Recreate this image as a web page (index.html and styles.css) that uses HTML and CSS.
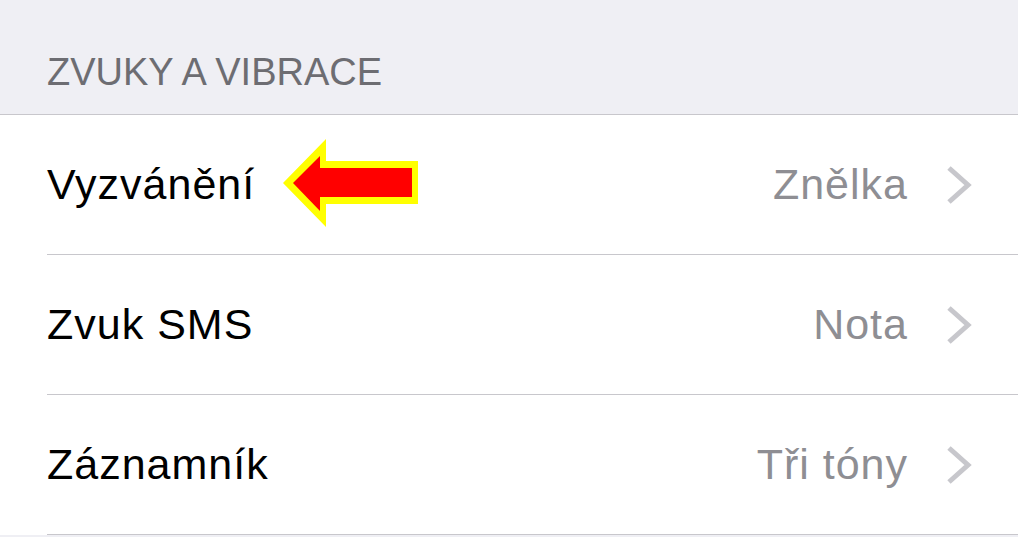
FILE: index.html
```html
<!DOCTYPE html>
<html>
    <head>
        <meta charset='utf-8'/>
        <title>Zvuky a vibrace</title>
        <link rel="stylesheet" href="styles.css">
    </head>
    <body>
        <div class="section-header">ZVUKY A VIBRACE</div>
        <ul class="settings-list">
            <li class="row">
                <div class="row-inner">
                    <span class="label">Vyzvánění</span>
                    <span class="value">Znělka</span>
                    <svg class="chevron" width="26" height="40" viewBox="0 0 26 40"><polyline points="3,3 22,20 3,37" fill="none" stroke="#c7c7cc" stroke-width="5"/></svg>
                </div>
                <svg class="arrow" width="135" height="88" viewBox="0 0 135 88">
                    <polygon points="0,44 43,0 43,22 135,22 135,65 43,65 43,88" fill="#ffff00"/>
                    <polygon points="10,44 37,17 37,29 129,29 129,58 37,58 37,72" fill="#ff0000"/>
                </svg>
            </li>
            <li class="row">
                <div class="row-inner">
                    <span class="label">Zvuk SMS</span>
                    <span class="value">Nota</span>
                    <svg class="chevron" width="26" height="40" viewBox="0 0 26 40"><polyline points="3,3 22,20 3,37" fill="none" stroke="#c7c7cc" stroke-width="5"/></svg>
                </div>
            </li>
            <li class="row">
                <div class="row-inner">
                    <span class="label">Záznamník</span>
                    <span class="value">Tři tóny</span>
                    <svg class="chevron" width="26" height="40" viewBox="0 0 26 40"><polyline points="3,3 22,20 3,37" fill="none" stroke="#c7c7cc" stroke-width="5"/></svg>
                </div>
            </li>
        </ul>
    </body>
</html>
```

FILE: styles.css
```css
* {
    margin: 0;
    padding: 0;
}

body {
    background: #efeff4;
    font-family: "Liberation Sans", Arial, sans-serif;
}

.section-header {
    height: 115px;
    box-sizing: border-box;
    display: flex;
    align-items: flex-end;
    padding: 0 0 23px 47px;
    font-size: 38px;
    line-height: 38px;
    color: #6d6d72;
    border-bottom: 1px solid #c8c7cc;
}

.settings-list {
    list-style: none;
    background: #fff;
}

.row {
    position: relative;
    padding-left: 47px;
}

.row-inner {
    height: 139px;
    display: flex;
    align-items: center;
    padding-right: 46px;
    border-bottom: 1px solid #c8c7cc;
    font-size: 43px;
    letter-spacing: 1px;
}

.label {
    flex: 1;
    color: #000;
}

.value {
    color: #8e8e93;
    margin-right: 38px;
}

.chevron {
    display: block;
}

.arrow {
    position: absolute;
    left: 283px;
    top: 24px;
}
```
